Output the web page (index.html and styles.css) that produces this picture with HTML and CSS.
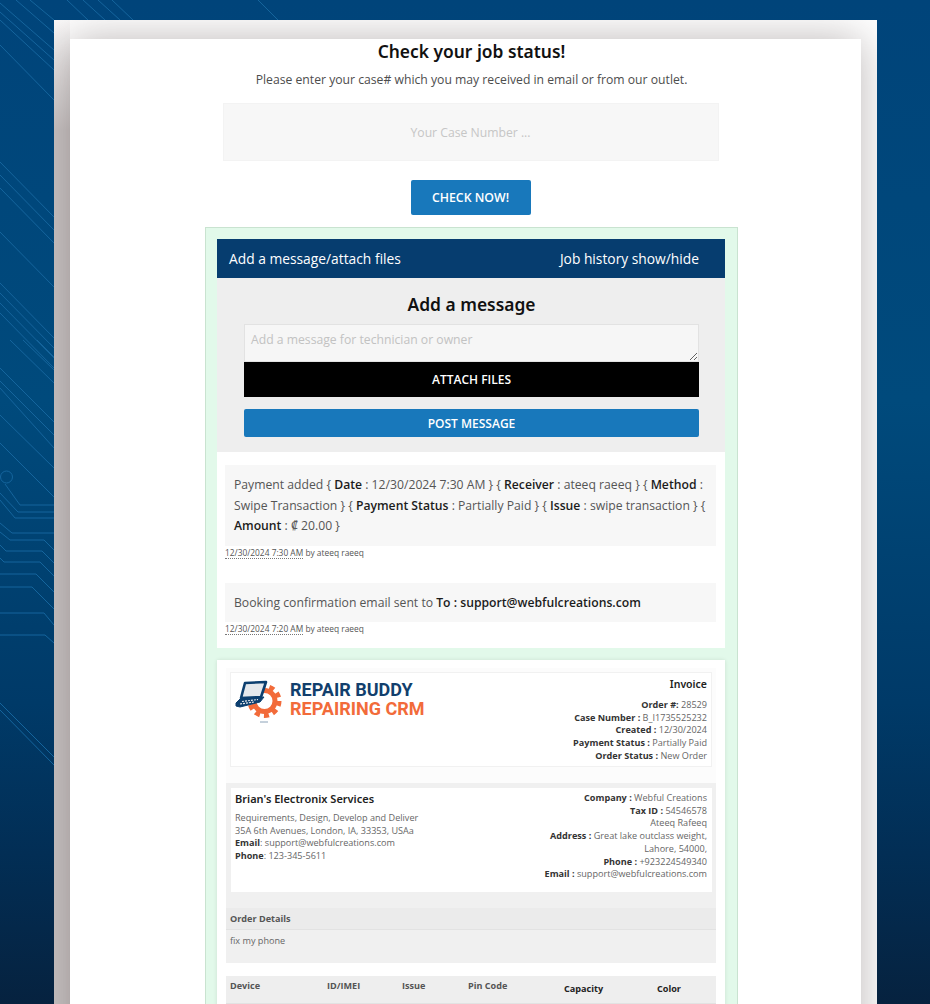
FILE: index.html
```html
<!DOCTYPE html>
<html lang="en">
<head>
<meta charset="utf-8">
<title>Check your job status</title>
<link rel="stylesheet" href="styles.css">
</head>
<body>
<svg class="circuit" width="930" height="1004" viewBox="0 0 930 1004" fill="none" aria-hidden="true">
  <g class="circuit-lines">
    <path d="M0 3 54 50M0 12 54 60M0 20 54 70M0 45 54 100M16 0 54 33M30 0 54 20"/>
    <path d="M67 0 88 20M83 0 105 20M98 0 120 20M112 0 133 20M258 0 278 20"/>
    <path d="M0 162 54 217M0 175 54 230M0 188 54 243M0 232 54 287M0 283 54 338M0 293 54 348M0 303 54 358M0 313 54 368"/>
    <path d="M10 340 54 383M23 340 54 370M37 340 54 357M0 368 54 422M0 381 54 435M0 388 54 448M0 415 54 468M0 443 54 497"/>
    <circle cx="6.500" cy="477" r="6"/>
    <path d="M5 484 20 505H54M0 493 18 512H54M0 500 15 518H54M0 523 12 533H54M0 532 10 540H44L54 550M0 545 6 551H42L54 563M0 558 4 562H40L54 576M0 574H36L54 592M0 587H32L54 609M0 613H44L54 625M0 635H45L54 643"/>
    <path d="M0 703 54 757M0 710 54 765"/>
  </g>
</svg>
<div class="frame">
  <main class="sheet">
    <h2 class="page-title">Check your job status!</h2>
    <p class="page-lead">Please enter your case# which you may received in email or from our outlet.</p>
    <input class="case-input" type="text" placeholder="Your Case Number ...">
    <button class="check-btn" type="button">CHECK NOW!</button>

    <section class="job">
      <nav class="job-bar">
        <span>Add a message/attach files</span>
        <span class="job-bar-right">Job history show/hide</span>
      </nav>
      <div class="composer">
        <h3 class="composer-title">Add a message</h3>
        <textarea class="composer-text" placeholder="Add a message for technician or owner"></textarea>
        <button class="attach-btn" type="button">ATTACH FILES</button>
        <button class="post-btn" type="button">POST MESSAGE</button>
      </div>
      <div class="history">
        <p class="msg">Payment added { <b>Date</b> : 12/30/2024 7:30 AM } { <b>Receiver</b> : ateeq raeeq } { <b>Method</b> : Swipe Transaction } { <b>Payment Status</b> : Partially Paid } { <b>Issue</b> : swipe transaction } { <b>Amount</b> : ₡ 20.00 }</p>
        <p class="meta"><span class="stamp">12/30/2024 7:30 AM</span> by ateeq raeeq</p>
        <p class="msg msg-second">Booking confirmation email sent to <b>To : support@webfulcreations.com</b></p>
        <p class="meta"><span class="stamp">12/30/2024 7:20 AM</span> by ateeq raeeq</p>
      </div>

      <article class="invoice">
        <header class="inv-head">
          <div class="inv-head-inner">
            <div class="logo">
              <svg class="logo-mark" width="50" height="46" viewBox="0 0 50 46" aria-hidden="true">
                <circle class="gear-teeth" cx="29.500" cy="22" r="14.500"/>
                <circle class="gear-ring" cx="29.500" cy="22" r="10.500"/>
                <path class="lap-lid" d="M10 4 31 3 26 18 6 19Z"/>
                <path class="lap-base" d="M5 20 29 18 25 23 5 28 1 27 1 24Z"/>
                <path class="lap-keys" d="M7 22.500 23 20.500M5 25 19 23"/>
                <path class="lap-line" d="M25 43H33"/>
              </svg>
              <div class="logo-text">
                <span class="logo-top">REPAIR BUDDY</span>
                <span class="logo-bot">REPAIRING CRM</span>
              </div>
            </div>
            <div class="inv-meta">
              <h4 class="inv-title">Invoice</h4>
              <div><b>Order #:</b> 28529</div>
              <div><b>Case Number :</b> B_I1735525232</div>
              <div><b>Created :</b> 12/30/2024</div>
              <div><b>Payment Status :</b> Partially Paid</div>
              <div><b>Order Status :</b> New Order</div>
            </div>
          </div>
        </header>

        <div class="inv-parties">
          <div class="parties-inner">
            <div class="biz">
              <h4 class="biz-name">Brian's Electronix Services</h4>
              <div>Requirements, Design, Develop and Deliver</div>
              <div>35A 6th Avenues, London, IA, 33353, USAa</div>
              <div><b>Email</b>: support@webfulcreations.com</div>
              <div><b>Phone</b>: 123-345-5611</div>
            </div>
            <div class="customer">
              <div><b>Company :</b> Webful Creations</div>
              <div><b>Tax ID :</b> 54546578</div>
              <div>Ateeq Rafeeq</div>
              <div><b>Address :</b> Great lake outclass weight,</div>
              <div>Lahore, 54000,</div>
              <div><b>Phone :</b> +923224549340</div>
              <div><b>Email :</b> support@webfulcreations.com</div>
            </div>
          </div>
          <div class="order-head">Order Details</div>
          <div class="order-body">fix my phone</div>
        </div>

        <div class="device-table">
          <span>Device</span>
          <span>ID/IMEI</span>
          <span>Issue</span>
          <span>Pin Code</span>
          <span class="dark-col">Capacity</span>
          <span class="dark-col">Color</span>
        </div>
      </article>
    </section>
  </main>
</div>
</body>
</html>
```
FILE: styles.css
```css
* { box-sizing: border-box; }
html, body { margin: 0; height: 1004px; overflow: hidden; }
body {
  position: relative;
  padding: 20px 53px 0 54px;
  background: linear-gradient(180deg, #00447a 0, #004a7c 40%, #003a68 70%, #022e55 85%, #06223f 100%);
  font-family: "Open Sans", "Noto Sans", sans-serif;
  color: #555;
}
.circuit { position: absolute; left: 0; top: 0; }
.circuit-lines path, .circuit-lines circle { stroke: #15659d; stroke-width: 1; }
.frame {
  position: relative;
  background: linear-gradient(180deg, #fbfafa 0, #cac5c5 110px) left top / 16px 100% no-repeat, #fff;
  height: 1100px;
  padding: 19px 16px 0;
  overflow: hidden;
}
.sheet {
  background: #fff;
  height: 1100px;
  padding-left: 12px;
  display: flex;
  flex-direction: column;
  align-items: center;
  box-shadow: 0 0 40px rgba(60, 45, 45, .34);
}
.page-title {
  margin: 0;
  font-family: "Noto Sans", sans-serif;
  font-size: 17.400px;
  line-height: 24px;
  font-weight: 600;
  color: #111;
}
.page-lead {
  margin: 7px 0 0;
  font-size: 12.200px;
  line-height: 20px;
  color: #4d4d4d;
}
.case-input {
  display: block;
  margin-top: 13px;
  margin-right: 2px;
  width: 496px;
  height: 58px;
  border: 1px solid #f3f3f3;
  background: #f7f7f7;
  text-align: center;
  font: 12.200px "Open Sans", sans-serif;
  padding: 0;
  outline: 0;
}
.case-input::placeholder { color: #c6c6c6; opacity: 1; }
.check-btn {
  display: block;
  margin-top: 19px;
  margin-right: 2px;
  width: 120px;
  height: 35px;
  border: 0;
  border-radius: 2px;
  background: #1878bb;
  color: #fff;
  font: 600 12.300px "Open Sans", sans-serif;
  padding: 0;
}
.job {
  margin-top: 12px;
  width: 533px;
  flex: none;
  border: 1px solid #c9e3d0;
  background: #e2f9ea;
  padding: 11px 12px 0 11px;
  height: 900px;
}
.job-bar {
  height: 39px;
  background: #063d6f;
  display: flex;
  justify-content: space-between;
  align-items: center;
  padding: 0 26px 0 12px;
  color: #fff;
  font-size: 13.800px;
}
.composer {
  height: 174px;
  background: #eee;
  padding: 14px 26px 0 27px;
  display: flex;
  flex-direction: column;
}
.composer-title {
  margin: 0;
  height: 32px;
  text-align: center;
  font-family: "Noto Sans", sans-serif;
  font-size: 17.400px;
  line-height: 24px;
  font-weight: 600;
  color: #111;
}
.composer-text {
  display: block;
  width: 100%;
  height: 38px;
  flex: none;
  border: 1px solid #e2e2e2;
  background: #f6f6f6;
  padding: 6px 6px;
  margin: 0;
  font: 12.200px/18px "Open Sans", sans-serif;
  outline: 0;
}
.composer-text::placeholder { color: #c2c2c2; opacity: 1; }
.attach-btn, .post-btn {
  display: block;
  width: 100%;
  flex: none;
  border: 0;
  color: #fff;
  font: 600 12px "Open Sans", sans-serif;
  padding: 0;
}
.attach-btn { height: 35px; background: #000; }
.post-btn { height: 28px; margin-top: 12px; background: #1878bb; border-radius: 2px; }
.history {
  height: 196px;
  background: #fff;
  padding: 13px 9px 0 8px;
}
.msg {
  margin: 0;
  padding: 10px 9px 9px;
  background: #f7f7f7;
  font-size: 12.200px;
  line-height: 20.500px;
  color: #555;
}
.msg b { color: #1c1c1c; font-weight: 600; }
.msg-second { margin-top: 19px; }
.meta {
  margin: 0;
  height: 18px;
  font-size: 8.400px;
  line-height: 14px;
  color: #555;
}
.stamp { border-bottom: 1px dotted #777; }
.invoice {
  margin-top: 12px;
  background: #fff;
  height: 500px;
  padding: 8px 9px;
  box-shadow: 0 0 4px rgba(0, 0, 0, .1);
  font-size: 9.100px;
  line-height: 12.700px;
  color: #666;
}
.invoice b { color: #333; font-weight: 700; }
.inv-head {
  height: 115px;
  background: #fcfcfc;
  padding: 4px;
}
.inv-head-inner {
  height: 95px;
  border: 1px solid #f1f1f1;
  background: #fff;
  display: flex;
  justify-content: space-between;
  padding: 1px 4px 0 4px;
}
.logo { display: flex; align-items: flex-start; gap: 5px; }
.logo-mark { flex: none; margin-top: 5px; }
.gear-teeth { fill: none; stroke: #f26b3a; stroke-width: 5; stroke-dasharray: 5 4.100; }
.gear-ring { fill: #fff; stroke: #f26b3a; stroke-width: 5; }
.lap-lid { fill: #e4e8ec; stroke: #0c3f6f; stroke-width: 2.600; stroke-linejoin: round; }
.lap-base { fill: #0c3f6f; stroke: #0c3f6f; stroke-width: 1; stroke-linejoin: round; }
.lap-keys { fill: none; stroke: #e4e8ec; stroke-width: 1.200; stroke-dasharray: 2 1; }
.lap-line { stroke: #8ba2b8; stroke-width: 1; }
.logo-text { display: flex; flex-direction: column; margin: 7px 0 0 0; font-family: Roboto, sans-serif; font-weight: 700; font-size: 18px; line-height: 18.500px; }
.logo-top { color: #123f6d; }
.logo-bot { color: #f26b3a; }
.inv-meta { text-align: right; }
.inv-title, .biz-name {
  margin: 0;
  font-family: "Noto Sans", sans-serif;
  font-weight: 600;
  color: #222;
}
.inv-title { font-size: 10.500px; line-height: 18px; padding-top: 1px; margin-bottom: 6px; }
.inv-parties {
  height: 180px;
  background: #f0f0f0;
}
.parties-inner {
  position: relative;
  top: 5px;
  margin: 0 4px 0 5px;
  height: 104px;
  background: #fff;
  display: flex;
  justify-content: space-between;
  padding: 3px 5px 0 4px;
}
.biz-name { font-size: 11px; line-height: 15px; margin-bottom: 6px; }
.order-head {
  margin-top: 21px;
  height: 22px;
  background: #ebebeb;
  border-bottom: 1px solid #e2e2e2;
  padding: 5px 4px 0;
  font-weight: 700;
  color: #555;
}
.order-body { height: 33px; padding: 5px 4px; }
.customer { text-align: right; padding-top: 1px; }
.device-table {
  margin-top: 13px;
  height: 28px;
  background: #eee;
  border-bottom: 1px solid #e2e2e2;
  display: grid;
  grid-template-columns: 97px 75px 66px 96px 93px 1fr;
  padding: 4px 4px 0;
  font-weight: 700;
  color: #555;
}
.dark-col { color: #222; padding-top: 3px; }
```
